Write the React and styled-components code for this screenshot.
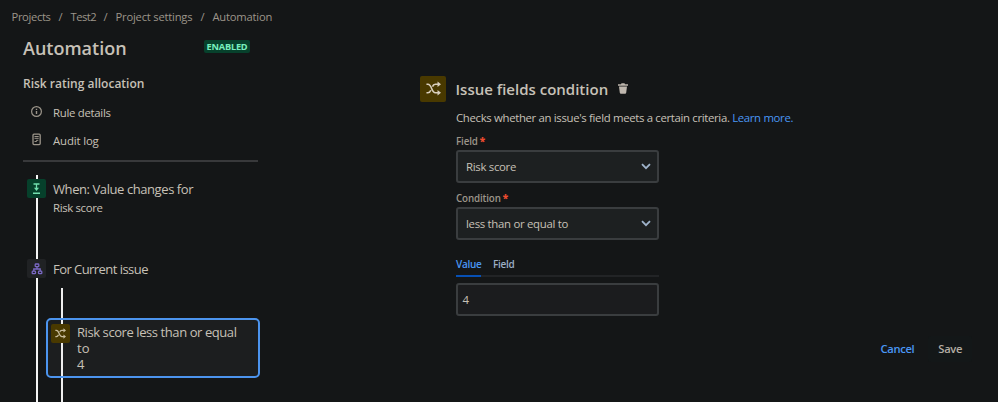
import React from "react";
import styled, { createGlobalStyle } from "styled-components";

const Global = createGlobalStyle`
  * { box-sizing: border-box; }
  body {
    margin: 0;
    background: #141617;
    color: #c7c1b7;
    font-family: "Open Sans", "Noto Sans", sans-serif;
    font-size: 11.4px;
    overflow: hidden;
  }
`;

const Page = styled.div`
  width: 998px;
  height: 402px;
  overflow: hidden;
  display: flex;
  flex-direction: column;
`;

const Label = styled.span`
  white-space: nowrap;
  letter-spacing: ${(p) => p.$ls || 0}px;
`;

const Breadcrumbs = styled.nav`
  height: 34px;
  padding-left: 11.5px;
  display: flex;
  line-height: 34px;
  font-size: 11.2px;
  color: #9c958a;
`;

const Crumb = styled(Label)`
  width: ${(p) => p.$w}px;
`;

const Slash = styled.span`
  width: 20px;
  text-align: center;
`;

const Body = styled.div`
  flex: 1;
  min-height: 0;
  display: flex;
`;

const Sidebar = styled.aside`
  width: 420px;
  padding-left: 23px;
`;

const TitleRow = styled.div`
  width: 227px;
  height: 28px;
  display: flex;
  align-items: center;
  justify-content: space-between;
`;

const PageTitle = styled.h1`
  margin: 0;
  font-size: 18px;
  line-height: 28px;
  font-weight: 600;
`;

const Badge = styled.span`
  width: 46px;
  height: 13px;
  margin-bottom: 3px;
  border-radius: 2px;
  background: #07412c;
  color: #79eebc;
  font-size: 9.2px;
  font-weight: 700;
  line-height: 13px;
  text-align: center;
  letter-spacing: -0.2px;
`;

const RuleName = styled.h2`
  margin: 12px 0 4px;
  font-size: 12px;
  font-weight: 600;
  line-height: 20px;
`;

const MenuItem = styled.div`
  height: 28px;
  display: flex;
  align-items: center;
  padding-left: 7px;
  gap: 10px;

  svg { display: block; width: 13px; height: 13px; margin-bottom: 2px; }
`;

const Divider = styled.hr`
  width: 235px;
  height: 2px;
  margin: 6px 0 13px;
  border: 0;
  background: #38393b;
`;

const Flow = styled.div`
  height: 240px;
  padding: 4px 0 0 4px;
  background: linear-gradient(#f5f5f5, #f5f5f5) 13px 0 / 2px 100% no-repeat;
`;

const Step = styled.div`
  height: ${(p) => p.$h}px;
  display: flex;
  align-items: flex-start;
  gap: 7px;
`;

const StepIcon = styled.div`
  width: 19px;
  height: 19px;
  flex: none;
  border-radius: 2px;
  background: ${(p) => p.$bg};
  color: ${(p) => p.$fg};
  display: flex;
  align-items: center;
  justify-content: center;
`;

const StepText = styled.div`
  display: flex;
  flex-direction: column;
  font-size: 13px;
  line-height: 21px;

  small { font-size: 11.4px; line-height: 16px; }
`;

const Branch = styled.div`
  height: 114px;
  margin-left: 18px;
  padding: 30px 0 0 1px;
  background: linear-gradient(#eeeeee, #eeeeee) 16px 0 / 2px 100% no-repeat;
`;

const SelectedCard = styled.div`
  width: 214px;
  height: 60px;
  padding: 4px 3px;
  display: flex;
  gap: 7px;
  border: 2px solid #4c94ee;
  border-radius: 5px;
  background: rgba(255, 255, 255, 0.035);
`;

const CardText = styled.div`
  display: flex;
  flex-direction: column;
  font-size: 13px;
  line-height: 16px;
`;

const Editor = styled.main`
  flex: 1;
  padding-top: 41px;
  display: flex;
  flex-direction: column;
`;

const Heading = styled.div`
  height: 27px;
  display: flex;
  align-items: center;
`;

const HeadIcon = styled.div`
  width: 26px;
  height: 26px;
  margin-right: 9.5px;
  border-radius: 2px;
  background: #493900;
  color: #d9cfbd;
  display: flex;
  align-items: center;
  justify-content: center;
`;

const HeadTitle = styled.h2`
  margin: 1px 10px 0 0;
  width: 152px;
  font-size: 15px;
  line-height: 24px;
  font-weight: 600;
  white-space: nowrap;
`;

const Form = styled.div`
  width: 380px;
  padding: 7px 0 0 36px;
  display: flex;
  flex-direction: column;
`;

const Hint = styled.p`
  margin: 0;
  line-height: 18px;
  white-space: nowrap;
  letter-spacing: -0.34px;

  a { color: #4a97f5; }
`;

const FieldLabel = styled.label`
  height: 14px;
  margin-top: ${(p) => p.$mt}px;
  margin-bottom: 2px;
  color: #9c958a;
  font-size: 9.8px;
  font-weight: 600;
  line-height: 14px;
  letter-spacing: -0.15px;

  b { color: #ee4b2f; margin-left: 2px; font-size: 10px; }
`;

const Control = styled.div`
  width: 203px;
  height: 33px;
  padding: 0 6px 0 ${(p) => p.$pl}px;
  display: flex;
  align-items: center;
  justify-content: space-between;
  border: 2px solid #3a3d3f;
  border-radius: 3px;
  background: ${(p) => p.$bg};
`;

const Tabs = styled.div`
  width: 203px;
  height: 22px;
  margin: 15px 0 6px;
  display: flex;
  gap: 12px;
  box-shadow: inset 0 -2px #222426;
`;

const Tab = styled.div`
  height: 22px;
  width: 25px;
  white-space: nowrap;
  color: ${(p) => (p.$active ? "#4a97f5" : "#9db0c7")};
  border-bottom: 2px solid ${(p) => (p.$active ? "#0750b4" : "transparent")};
  font-size: 10px;
  font-weight: 600;
  line-height: 19px;
  letter-spacing: -0.3px;
`;

const Actions = styled.div`
  margin-top: 20px;
  padding-right: 26px;
  display: flex;
  justify-content: flex-end;
  gap: 4px;
`;

const Action = styled.button`
  height: 26px;
  padding: 0 10px;
  border: 0;
  border-radius: 3px;
  font: 600 11.2px/26px "Open Sans", sans-serif;
  letter-spacing: -0.35px;
  color: ${(p) => (p.$primary ? "#b5aea4" : "#4a97f5")};
  background: ${(p) => (p.$primary ? "#131718" : "transparent")};
`;

const Shuffle = ({ size }) => (
  <svg width={size} height={size} viewBox="0 0 16 16" fill="none" stroke="currentColor" strokeWidth="1.7">
    <path d="M.5 3.500H2c4.600 0 3.400 9 8 9h3M.5 12.500H2c1.700 0 2.600-1.200 3.100-2.600M6.900 6c.5-1.400 1.400-2.500 3.100-2.500h3" />
    <path d="M12.300.5 16 3.500l-3.700 3zM12.300 9.500l3.700 3-3.700 3z" fill="currentColor" stroke="none" />
  </svg>
);

const Info = () => (
  <svg viewBox="0 0 13 13" fill="none" stroke="#9c958a" strokeWidth="1.2">
    <circle cx="6.500" cy="6.500" r="4.900" />
    <path d="M6.500 5.900v3M6.500 3.800v1.300" strokeWidth="1.400" />
  </svg>
);

const Log = () => (
  <svg viewBox="0 0 13 13" fill="none" stroke="#9c958a" strokeWidth="1.300">
    <rect x="3" y="1.200" width="7.200" height="10.400" rx="1" />
    <path d="M4.500 3.500h4.200M4.500 5.300h4.200M4.500 8.500h2v-1.200h1.800" strokeWidth="1" />
  </svg>
);

const ValueChange = () => (
  <svg width="11" height="13" viewBox="0 0 11 13" fill="none" stroke="#72dfae">
    <path d="M2.500 2h6M2 11.300h7" strokeWidth="1.500" />
    <path d="M5.500 2v5" strokeWidth="1.300" />
    <path d="M3 5.700h5L5.500 9z" fill="#72dfae" stroke="none" />
  </svg>
);

const Tree = () => (
  <svg width="12" height="12" viewBox="0 0 12 12" fill="none" stroke="#7a68c4" strokeWidth="1.300">
    <rect x="4.200" y="1" width="3.600" height="2.700" rx=".8" />
    <rect x="1.200" y="8.200" width="3.300" height="2.500" rx=".8" />
    <rect x="7.500" y="8.200" width="3.300" height="2.500" rx=".8" />
    <path d="M6 3.700V6M2.800 8.200V6h6.400v2.200" />
  </svg>
);

const Trash = () => (
  <svg width="10" height="11" viewBox="0 0 10 11" fill="#bfb7ae">
    <path d="M0 1.300h3L3.500.3h3l.5 1h3v1.400H0zM1 3.500h8l-.8 6.200c-.1.600-.500 1-1.100 1H2.900c-.600 0-1-.400-1.100-1z" />
  </svg>
);

const Chevron = () => (
  <svg width="10" height="7" viewBox="0 0 10 7" fill="none" stroke="#9fb3cb" strokeWidth="1.800">
    <path d="M1 1.200 5 5.200l4-4" />
  </svg>
);

export default function App() {
  return (
    <Page>
      <Global />
      <Breadcrumbs>
        <Crumb $w={39} $ls={-0.35}>Projects</Crumb>
        <Slash>/</Slash>
        <Crumb $w={25} $ls={-0.5}>Test2</Crumb>
        <Slash>/</Slash>
        <Crumb $w={77} $ls={-0.2}>Project settings</Crumb>
        <Slash>/</Slash>
        <Crumb $w={60} $ls={-0.2}>Automation</Crumb>
      </Breadcrumbs>
      <Body>
        <Sidebar>
          <TitleRow>
            <PageTitle>Automation</PageTitle>
            <Badge>ENABLED</Badge>
          </TitleRow>
          <RuleName>Risk rating allocation</RuleName>
          <MenuItem><Info /><Label $ls={-0.3}>Rule details</Label></MenuItem>
          <MenuItem><Log /><Label $ls={-0.15}>Audit log</Label></MenuItem>
          <Divider />
          <Flow>
            <Step $h={80}>
              <StepIcon $bg="#06402b"><ValueChange /></StepIcon>
              <StepText>
                <Label $ls={-0.42}>When: Value changes for</Label>
                <small><Label $ls={-0.35}>Risk score</Label></small>
              </StepText>
            </Step>
            <Step $h={29}>
              <StepIcon $bg="#202224"><Tree /></StepIcon>
              <StepText><Label $ls={-0.55}>For Current issue</Label></StepText>
            </Step>
            <Branch>
              <SelectedCard>
                <StepIcon $bg="#493900" $fg="#c9bd9d"><Shuffle size={11} /></StepIcon>
                <CardText>
                  <Label $ls={-0.42}>Risk score less than or equal</Label>
                  <span>to</span>
                  <span>4</span>
                </CardText>
              </SelectedCard>
            </Branch>
          </Flow>
        </Sidebar>
        <Editor>
          <Heading>
            <HeadIcon><Shuffle size={15} /></HeadIcon>
            <HeadTitle>Issue fields condition</HeadTitle>
            <Trash />
          </Heading>
          <Form>
            <Hint>Checks whether an issue's field meets a certain criteria. <a>Learn more.</a></Hint>
            <FieldLabel $mt={7}>Field<b>*</b></FieldLabel>
            <Control $pl={8} $bg="#1d2021"><Label $ls={-0.3}>Risk score</Label><Chevron /></Control>
            <FieldLabel $mt={8}>Condition<b>*</b></FieldLabel>
            <Control $pl={8} $bg="#1d2021"><Label $ls={-0.3}>less than or equal to</Label><Chevron /></Control>
            <Tabs><Tab $active>Value</Tab><Tab>Field</Tab></Tabs>
            <Control $pl={4.5} $bg="#1b1c1e"><Label>4</Label></Control>
          </Form>
          <Actions>
            <Action>Cancel</Action>
            <Action $primary>Save</Action>
          </Actions>
        </Editor>
      </Body>
    </Page>
  );
}
